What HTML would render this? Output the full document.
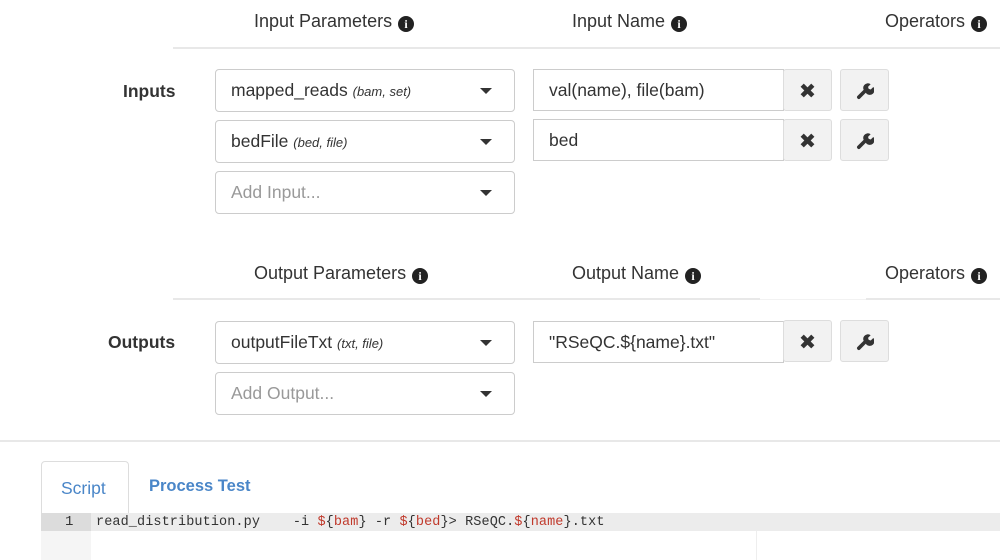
<!DOCTYPE html>
<html><head><meta charset="utf-8"><style>
body{margin:0;width:1000px;height:560px;overflow:hidden;background:#fff;font-family:"Liberation Sans",sans-serif;color:#333;position:relative}
.a{position:absolute}
.h{font-size:18px;color:#333;white-space:nowrap}
.i{display:inline-block;width:16px;height:16px;border-radius:50%;background:#222;color:#fff;font:bold 12px/16px "Liberation Serif",serif;text-align:center;vertical-align:-1px;margin-left:6px}
.sel{position:absolute;left:215px;width:298px;height:41px;border:1px solid #ccc;border-radius:4px;font-size:17.5px;line-height:41px;box-sizing:content-box}
.sel span.t{position:absolute;left:15px}
.sel em{font-size:13px;color:#333}
.car{position:absolute;right:22px;top:18px;width:0;height:0;border-left:6px solid transparent;border-right:6px solid transparent;border-top:6px solid #333}
.inp{position:absolute;left:533px;height:40px;border:1px solid #ccc;font-size:17.5px;line-height:40px;padding-left:15px;box-sizing:content-box;width:234px}
.btn{position:absolute;width:47px;height:40px;background:#f2f2f2;border:1px solid #ddd;border-radius:3px}
.line{position:absolute;height:2px;background:#e8e8e8}
.lbl{position:absolute;font-weight:bold;font-size:17.5px}
</style></head><body>
<div class="a h" style="left:254px;top:11px">Input Parameters<span class="i">i</span></div>
<div class="a h" style="left:572px;top:11px">Input Name<span class="i">i</span></div>
<div class="a h" style="left:885px;top:11px">Operators<span class="i">i</span></div>
<div class="line" style="left:173px;top:47px;width:827px"></div>
<div class="lbl" style="left:123px;top:81px">Inputs</div>

<div class="sel" style="top:69px"><span class="t">mapped_reads <em>(bam, set)</em></span><div class="car"></div></div>
<div class="sel" style="top:120px"><span class="t">bedFile <em>(bed, file)</em></span><div class="car"></div></div>
<div class="sel" style="top:171px;color:#999"><span class="t">Add Input...</span><div class="car"></div></div>

<div class="inp" style="top:69px">val(name), file(bam)</div>
<div class="inp" style="top:119px">bed</div>

<div class="h a" style="left:254px;top:263px">Output Parameters<span class="i">i</span></div>
<div class="a h" style="left:572px;top:263px">Output Name<span class="i">i</span></div>
<div class="a h" style="left:885px;top:263px">Operators<span class="i">i</span></div>
<div class="line" style="left:173px;top:298px;width:587px"></div>
<div class="line" style="left:760px;top:299px;width:106px;height:1px;background:#f2f2f2"></div>
<div class="line" style="left:866px;top:298px;width:134px"></div>
<div class="lbl" style="left:108px;top:332px">Outputs</div>

<div class="sel" style="top:321px"><span class="t">outputFileTxt <em>(txt, file)</em></span><div class="car"></div></div>
<div class="sel" style="top:372px;color:#999"><span class="t">Add Output...</span><div class="car"></div></div>
<div class="inp" style="top:321px">"RSeQC.${name}.txt"</div>

<svg width="0" height="0" style="position:absolute"><defs>
<symbol id="x" viewBox="0 0 16 16"><path d="M1.5 4.5L4.5 1.5 8 5 11.5 1.5 14.5 4.5 11 8 14.5 11.5 11.5 14.5 8 11 4.5 14.5 1.5 11.5 5 8z" fill="#333"/></symbol>
<symbol id="w" viewBox="0 0 16 16"><path d="M2.5 13.5l6.5-6.5" stroke="#333" stroke-width="3.2" stroke-linecap="round"/><path d="M8 8.5a4 4 0 0 1 5-6.5l-2.3 2.3 0.6 1.8 1.8 0.6 2.3-2.3A4 4 0 0 1 9 10z" fill="#333"/></symbol>
</defs></svg>

<div class="btn" style="left:783px;top:69px"><svg class="a" style="left:15px;top:12px" width="17" height="17"><use href="#x"/></svg></div>
<div class="btn" style="left:840px;top:69px"><svg class="a" style="left:15px;top:12px" width="18" height="18"><use href="#w"/></svg></div>
<div class="btn" style="left:783px;top:119px"><svg class="a" style="left:15px;top:12px" width="17" height="17"><use href="#x"/></svg></div>
<div class="btn" style="left:840px;top:119px"><svg class="a" style="left:15px;top:12px" width="18" height="18"><use href="#w"/></svg></div>
<div class="btn" style="left:783px;top:320px"><svg class="a" style="left:15px;top:12px" width="17" height="17"><use href="#x"/></svg></div>
<div class="btn" style="left:840px;top:320px"><svg class="a" style="left:15px;top:12px" width="18" height="18"><use href="#w"/></svg></div>

<div class="line" style="left:0;top:440px;width:1000px"></div>

<div class="a" style="left:41px;top:461px;width:86px;height:52px;border:1px solid #ddd;border-bottom:none;border-radius:4px 4px 0 0;background:#fff"></div>
<div class="a" style="left:61px;top:478px;font-size:17.5px;color:#4a86c8">Script</div>
<div class="a" style="left:149px;top:477px;font-size:16.5px;color:#4a86c8;font-weight:bold">Process Test</div>

<div class="a" style="left:41px;top:513px;width:50px;height:47px;background:#f5f5f5"></div>
<div class="a" style="left:41px;top:513px;width:959px;height:18px;background:#ececec"></div>
<div class="a" style="left:41px;top:513px;width:50px;height:18px;background:#dcdcdc"></div>
<div class="a" style="left:756px;top:531px;width:1px;height:29px;background:#eee"></div>
<div class="a" style="left:65px;top:514px;font:14px/17px 'Liberation Mono',monospace;color:#333">1</div>
<div class="a" style="left:96px;top:514px;font:13.5px/17px 'Liberation Mono',monospace;letter-spacing:0.1px;color:#333;white-space:pre">read_distribution.py    -i <span style="color:#c0392b">$</span>{<span style="color:#c0392b">bam</span>} -r <span style="color:#c0392b">$</span>{<span style="color:#c0392b">bed</span>}&gt; RSeQC.<span style="color:#c0392b">$</span>{<span style="color:#c0392b">name</span>}.txt</div>
</body></html>
